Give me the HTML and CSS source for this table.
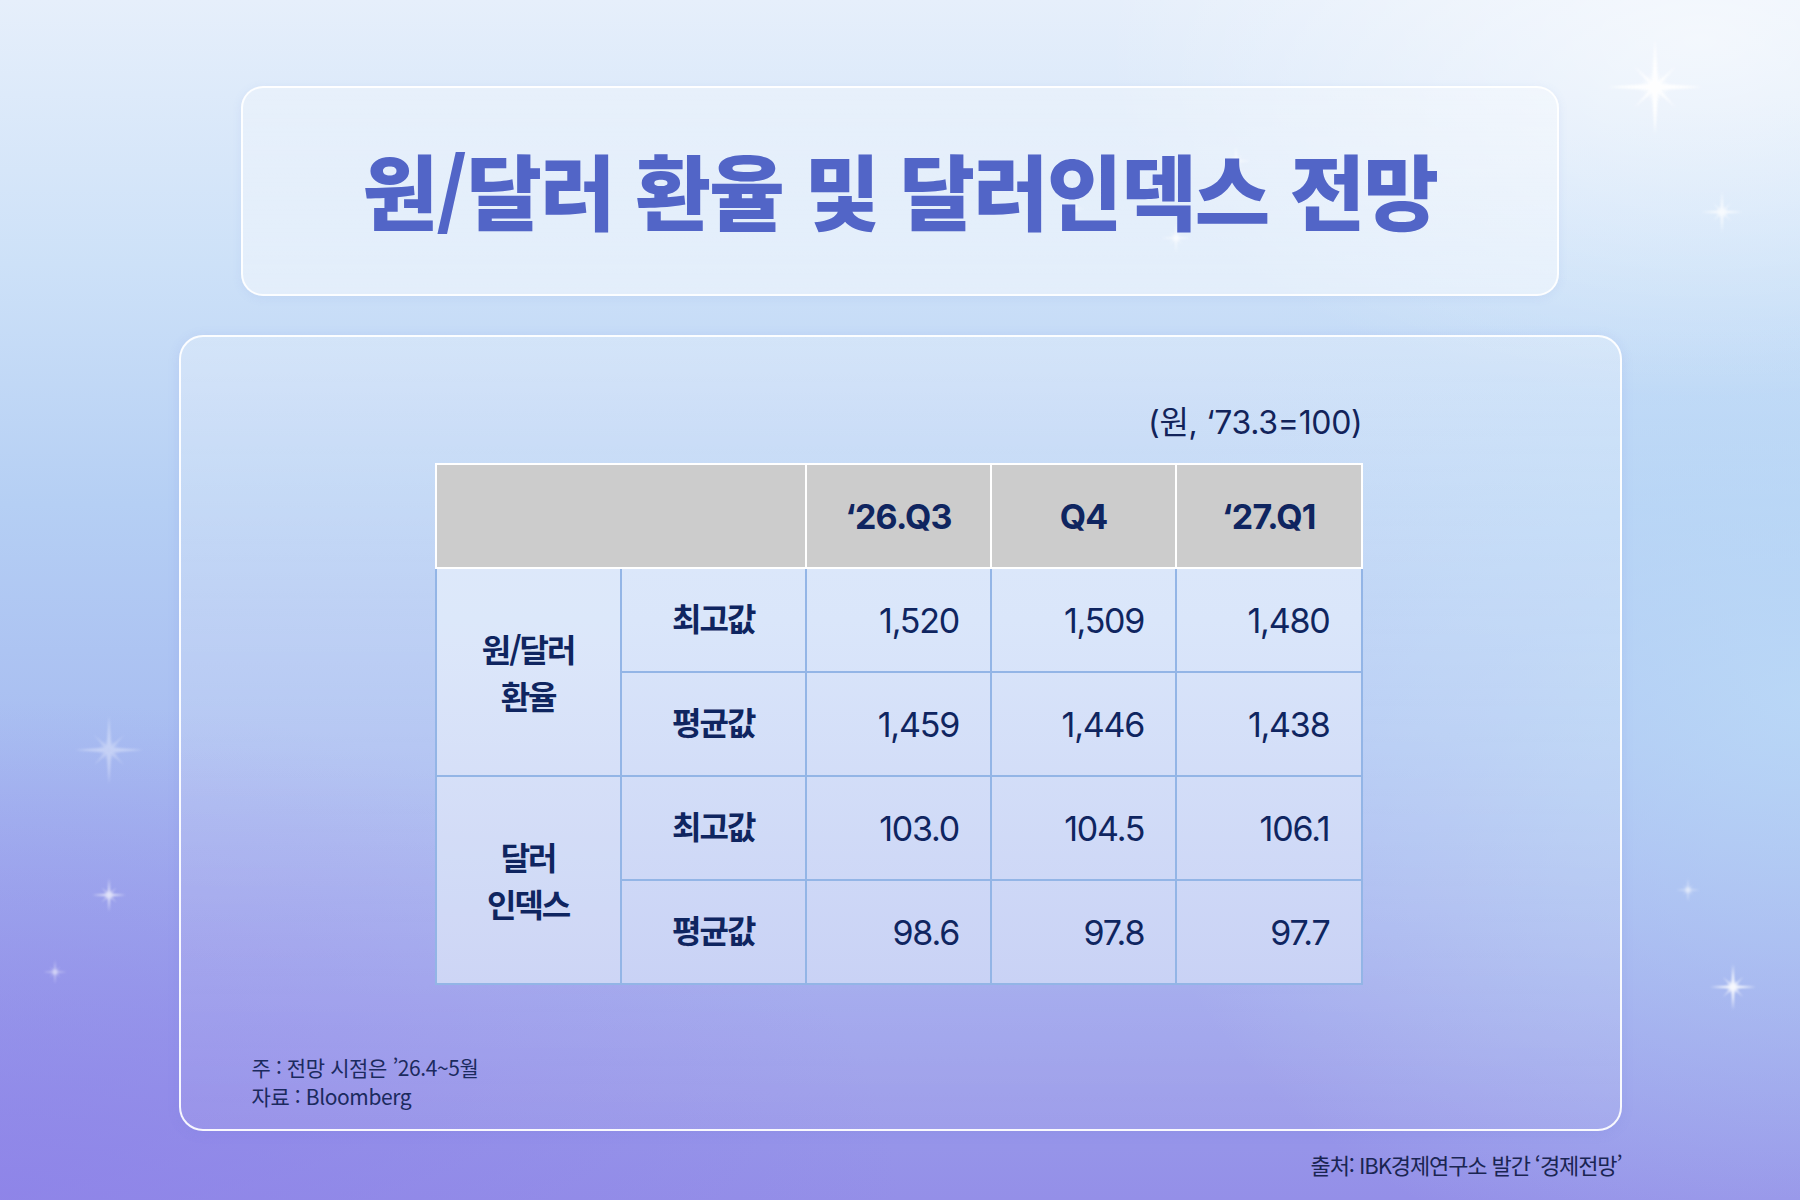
FILE: index.html
```html
<!DOCTYPE html>
<html lang="ko">
<head>
<meta charset="utf-8">
<title>원/달러 환율 및 달러인덱스 전망</title>
<link rel="stylesheet" href="styles.css">
</head>
<body>
<div class="page">
  <svg class="spark s1" viewBox="-50 -50 100 100"><use href="#star"/></svg>
  <svg class="spark s2" viewBox="-50 -50 100 100"><use href="#star"/></svg>
  <svg class="spark s3" viewBox="-50 -50 100 100"><use href="#star"/></svg>
  <svg class="spark s4" viewBox="-50 -50 100 100"><use href="#star"/></svg>
  <svg class="spark s5" viewBox="-50 -50 100 100"><use href="#star"/></svg>
  <svg class="spark s6" viewBox="-50 -50 100 100"><use href="#star"/></svg>
  <svg class="spark s7" viewBox="-50 -50 100 100"><use href="#star"/></svg>

  <header class="title-box">
    <h1 class="title">원/달러 환율 및 달러인덱스 전망</h1>
    <svg class="spark t1" viewBox="-50 -50 100 100"><use href="#star"/></svg>
    <svg class="spark t2" viewBox="-50 -50 100 100"><use href="#star"/></svg>
    <svg class="spark t3" viewBox="-50 -50 100 100"><use href="#star"/></svg>
  </header>

  <main class="card">
    <div class="table-wrap">
      <div class="unit">(원, ‘73.3=100)</div>
      <table class="data">
        <colgroup>
          <col class="c">
          <col class="c">
          <col class="c">
          <col class="c">
          <col class="c">
        </colgroup>
        <thead>
          <tr>
            <th colspan="2"></th>
            <th>‘26.Q3</th>
            <th>Q4</th>
            <th>‘27.Q1</th>
          </tr>
        </thead>
        <tbody>
          <tr>
            <td class="group" rowspan="2">원/달러<br>환율</td>
            <td class="label">최고값</td>
            <td class="num">1,520</td>
            <td class="num">1,509</td>
            <td class="num">1,480</td>
          </tr>
          <tr>
            <td class="label">평균값</td>
            <td class="num">1,459</td>
            <td class="num">1,446</td>
            <td class="num">1,438</td>
          </tr>
          <tr>
            <td class="group" rowspan="2">달러<br>인덱스</td>
            <td class="label">최고값</td>
            <td class="num">103.0</td>
            <td class="num">104.5</td>
            <td class="num">106.1</td>
          </tr>
          <tr>
            <td class="label">평균값</td>
            <td class="num">98.6</td>
            <td class="num">97.8</td>
            <td class="num">97.7</td>
          </tr>
        </tbody>
      </table>
    </div>
    <div class="notes">
      <p>주 : 전망 시점은 ’26.4~5월</p>
      <p>자료 : Bloomberg</p>
    </div>
  </main>

  <footer class="source">출처: IBK경제연구소 발간 ‘경제전망’</footer>
</div>

<svg class="defs" width="0" height="0">
  <defs>
    <radialGradient id="glow">
      <stop offset="0" stop-color="#ffffff" stop-opacity="1"/>
      <stop offset="1" stop-color="#ffffff" stop-opacity="0"/>
    </radialGradient>
    <g id="star">
      <circle cx="0" cy="0" r="16" fill="url(#glow)"/>
      <path d="M0 -50 L3.5 -3.5 L50 0 L3.5 3.5 L0 50 L-3.5 3.5 L-50 0 L-3.5 -3.5 Z" fill="#ffffff"/>
      <path d="M0 -50 L3 -3 L50 0 L3 3 L0 50 L-3 3 L-50 0 L-3 -3 Z" fill="#ffffff" transform="rotate(45) scale(0.62)"/>
    </g>
  </defs>
</svg>
</body>
</html>
```

FILE: styles.css
```css
* { box-sizing: border-box; }

html, body {
  margin: 0;
  padding: 0;
}

body {
  width: 1800px;
  height: 1200px;
  overflow: hidden;
  font-family: "Inter", "Noto Sans CJK KR", sans-serif;
  color: #0f2560;
  background:
    radial-gradient(ellipse 600px 360px at 1700px 40px, rgba(255,255,255,0.6), rgba(255,255,255,0) 100%),
    radial-gradient(ellipse 700px 600px at 1800px 700px, rgba(190,222,248,0.75), rgba(190,222,248,0) 100%),
    radial-gradient(ellipse 900px 500px at 0px 1200px, rgba(140,128,232,0.7), rgba(140,128,232,0) 100%),
    linear-gradient(180deg, #e6effb 0%, #cde1f8 22%, #b5cff4 42%, #a8bdf1 62%, #9ca4ec 82%, #948fe8 100%);
}

.page {
  position: relative;
  width: 1800px;
  height: 1200px;
  display: flex;
  flex-direction: column;
  align-items: center;
  padding-top: 86px;
}

.defs { position: absolute; }

/* sparkles */
.spark {
  position: absolute;
  filter: blur(1.2px);
  pointer-events: none;
}
.s1 { left: 1608px; top: 40px; width: 94px; height: 94px; opacity: 0.95; }
.s2 { left: 1701px; top: 191px; width: 42px; height: 42px; opacity: 0.75; }
.s3 { left: 75px; top: 716px; width: 68px; height: 68px; opacity: 0.35; }
.s4 { left: 92px; top: 878px; width: 34px; height: 34px; opacity: 0.7; }
.s5 { left: 43px; top: 960px; width: 24px; height: 24px; opacity: 0.6; }
.s6 { left: 1676px; top: 878px; width: 24px; height: 24px; opacity: 0.65; }
.s7 { left: 1710px; top: 964px; width: 46px; height: 46px; opacity: 0.9; }
.t1 { left: 978px; top: 58px; width: 30px; height: 30px; opacity: 0.8; }
.t2 { left: 825px; top: 113px; width: 16px; height: 16px; opacity: 0.7; }
.t3 { left: 918px; top: 135px; width: 30px; height: 30px; opacity: 0.75; }

/* title */
.title-box {
  position: relative;
  width: 1318px;
  height: 210px;
  border-radius: 22px;
  border: 2.5px solid rgba(255,255,255,0.9);
  background: linear-gradient(180deg, rgba(255,255,255,0.3), rgba(255,255,255,0.48));
  box-shadow: 0 2px 10px rgba(120,150,220,0.12);
  display: flex;
  align-items: center;
  justify-content: center;
}

.title {
  margin: 0;
  font-family: "Noto Sans CJK KR", sans-serif;
  font-weight: 900;
  font-size: 82px;
  letter-spacing: -0.02em;
  color: #5265c7;
  line-height: 1;
  padding-bottom: 4px;
  position: relative;
  z-index: 1;
}

/* card */
.card {
  margin-top: 39px;
  width: 1443px;
  height: 796px;
  border-radius: 24px;
  border: 2.5px solid rgba(255,255,255,0.92);
  background: linear-gradient(180deg, rgba(255,255,255,0.25), rgba(255,255,255,0.08));
  box-shadow: 0 2px 12px rgba(110,120,220,0.15);
  display: flex;
  flex-direction: column;
  padding-top: 66px;
}

.table-wrap {
  width: 928px;
  margin-left: 254px;
}

.unit {
  text-align: right;
  font-size: 32px;
  font-weight: 400;
  letter-spacing: -0.3px;
  padding-right: 0;
  line-height: 40px;
  margin-bottom: 20px;
  color: #12235a;
}

.data {
  width: 928px;
  border-collapse: collapse;
  table-layout: fixed;
  background: linear-gradient(180deg, #dde9fb 0%, #dae6fa 30%, #c9d2f5 100%);
}

.data col.c { width: 20%; }

.data th,
.data td {
  height: 104px;
  padding: 0;
}

.data th {
  background: #cccccc;
  border: 2px solid #ffffff;
  font-size: 34px;
  font-weight: 700;
  letter-spacing: -0.8px;
  text-align: center;
  color: #0f2560;
}

.data td {
  border: 2px solid #93b5e6;
  color: #0f2560;
}

.data td.group,
.data td.label {
  text-align: center;
  font-family: "Noto Sans CJK KR", sans-serif;
  font-weight: 700;
  font-size: 32px;
  letter-spacing: -2px;
}

.data td.group {
  line-height: 47px;
  background: rgba(255,255,255,0.08);
}

.data td.label {
  padding-bottom: 6px;
}

.data td.num {
  text-align: right;
  padding-right: 31px;
  font-size: 34px;
  font-weight: 400;
  letter-spacing: -1.2px;
}

/* notes */
.notes {
  margin-top: auto;
  padding: 0 0 18px 71px;
  font-family: "Noto Sans CJK KR", sans-serif;
  font-size: 21px;
  letter-spacing: -0.4px;
  line-height: 29px;
  color: #1b2a5e;
}

.notes p { margin: 0; }

/* source */
.source {
  width: 1443px;
  text-align: right;
  margin-top: 18px;
  padding-right: 0;
  font-family: "Noto Sans CJK KR", sans-serif;
  font-size: 22px;
  letter-spacing: -1.1px;
  color: #1a2552;
  line-height: 30px;
}
```
